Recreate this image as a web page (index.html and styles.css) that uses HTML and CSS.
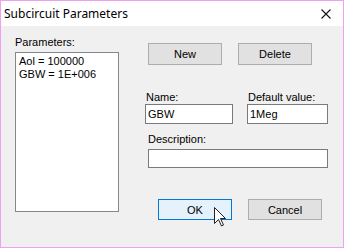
FILE: index.html
```html
<!DOCTYPE html>
<html lang="en">
<head>
  <meta charset="UTF-8">
  <title>Subcircuit Parameters</title>
  <link rel="stylesheet" href="styles.css">
</head>
<body>
  <div class="window">
    <div class="titlebar">
      <span class="title">Subcircuit Parameters</span>
      <svg class="close" width="10" height="10" viewBox="0 0 10 10">
        <path d="M0.5 0.5 L9.5 9.5 M9.5 0.5 L0.5 9.5" stroke="#111" stroke-width="1.1" fill="none"/>
      </svg>
    </div>

    <div class="content">
      <div class="left">
        <div class="label">Parameters:</div>
        <div class="listbox">
          <div>Aol = 100000</div>
          <div>GBW = 1E+006</div>
        </div>
      </div>

      <div class="right">
        <div class="btn-row">
          <button class="btn">New</button>
          <button class="btn">Delete</button>
        </div>

        <div class="fields">
          <div class="field name">
            <div class="label">Name:</div>
            <div class="input">GBW</div>
          </div>
          <div class="field value">
            <div class="label">Default value:</div>
            <div class="input">1Meg</div>
          </div>
        </div>

        <div class="field desc">
          <div class="label">Description:</div>
          <div class="input"></div>
        </div>

        <div class="btn-row ok-row">
          <button class="btn default">OK</button>
          <button class="btn">Cancel</button>
        </div>
      </div>
    </div>

    <svg class="cursor" width="13" height="20" viewBox="0 0 13 20">
      <path d="M0.5 0.5 L0.5 16.5 L4.5 12.5 L7.5 19 L9.5 18 L6.5 11.5 L11.5 11.5 Z" fill="#fff" stroke="#222" stroke-width="1"/>
    </svg>
  </div>
</body>
</html>
```

FILE: styles.css
```css
* {
  margin: 0;
  padding: 0;
  box-sizing: border-box;
}
body {
  font-family: 'Liberation Sans', Arial, sans-serif;
  font-size: 11px;
  color: #000;
  background: #fff;
}
.window {
  position: relative;
  width: 344px;
  height: 248px;
  border: 1px solid #f0a0f0;
  background: #f0f0f0;
}
.titlebar {
  height: 25px;
  background: #fff;
  display: flex;
  align-items: center;
  justify-content: space-between;
  padding: 0 12px 0 3px;
}
.title {
  font-family: 'Noto Sans', sans-serif;
  font-size: 12px;
  color: #000;
}
.content {
  display: flex;
  padding-left: 14px;
}
.label {
  line-height: 13px;
  height: 13px;
}
.left {
  width: 104px;
  padding-top: 10px;
}
.left .label {
  padding-left: 0;
}
.listbox {
  margin-top: 3px;
  height: 160px;
  background: #fff;
  border: 1px solid #828790;
  padding: 2px 3px;
  line-height: 13px;
}
.right {
  margin-left: 26px;
  width: 184px;
}
.btn-row {
  display: flex;
  gap: 16px;
  margin-top: 17px;
  padding-left: 3px;
}
.btn {
  width: 74px;
  height: 22px;
  font-family: inherit;
  font-size: 11px;
  background: #e1e1e1;
  border: 1px solid #adadad;
  color: #000;
}
.btn.default {
  background: #e5f1fb;
  border-color: #0078d7;
}
.fields {
  display: flex;
  margin-top: 26px;
}
.field .label {
  padding-left: 1px;
}
.input {
  height: 20px;
  background: #fff;
  border: 1px solid #7a7a7a;
  padding: 2px 2px;
  line-height: 14px;
}
.name {
  width: 88px;
}
.value {
  width: 81px;
  margin-left: 14px;
}
.desc {
  margin-top: 9px;
  margin-left: 3px;
  width: 180px;
}
.desc .label {
  margin-bottom: 3px;
  padding-left: 0;
}
.desc .input {
  height: 19px;
}
.ok-row {
  margin-top: 31px;
  padding-left: 13px;
}
.ok-row .btn {
  height: 21px;
}
.cursor {
  position: absolute;
  left: 213px;
  top: 206px;
}
```
